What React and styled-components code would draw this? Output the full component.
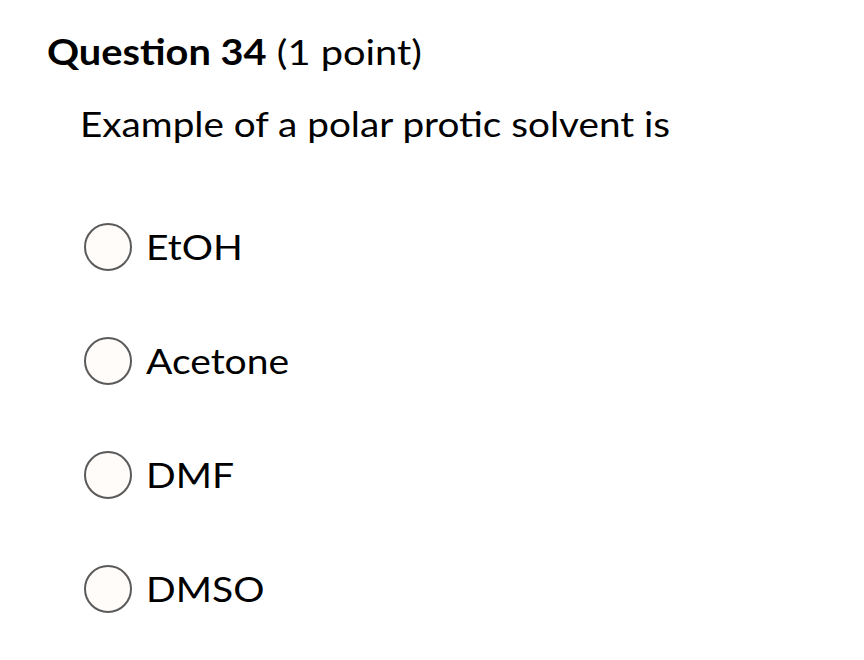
import React from 'react'
import styled, { createGlobalStyle } from 'styled-components'

const GlobalStyle = createGlobalStyle`
  html, body {
    margin: 0;
    padding: 0;
    background: #ffffff;
  }
  body {
    font-family: Lato, "Liberation Sans", sans-serif;
    color: #000000;
  }
`

const options = ['EtOH', 'Acetone', 'DMF', 'DMSO']

const App = () => {
  return (
    <>
      <GlobalStyle />
      <Page>
        <Title>
          <strong>Question 34</strong> (1 point)
        </Title>
        <Prompt>Example of a polar protic solvent is</Prompt>
        <Options>
          {options.map(opt => (
            <Option key={opt}>
              <Radio type="radio" name="q34" />
              <OptionText>{opt}</OptionText>
            </Option>
          ))}
        </Options>
      </Page>
    </>
  )
}

export default App

const Page = styled.div`
  width: 864px;
  height: 660px;
  box-sizing: border-box;
  padding: 31px 0 0 47px;
  overflow: hidden;
`

// the screenshot's text is a little wider than Lato, so stretch it a bit
const Title = styled.h2`
  width: fit-content;
  margin: 0;
  font-size: 35.5px;
  font-weight: 400;
  line-height: 1.2;
  color: #000;
  white-space: nowrap;
  transform-origin: left center;
  transform: scaleX(1.12);
  strong {
    font-weight: 700;
  }
`

const Prompt = styled.p`
  width: fit-content;
  margin: 29px 0 0 33px;
  font-size: 35.5px;
  line-height: 1.2;
  white-space: nowrap;
  transform-origin: left center;
  transform: scaleX(1.09);
`

const Options = styled.div`
  display: flex;
  flex-direction: column;
  gap: 66px;
  margin: 78px 0 0 37px;
`

const Option = styled.label`
  display: flex;
  align-items: center;
  gap: 14px;
  height: 48px;
`

const Radio = styled.input`
  appearance: none;
  margin: 0;
  flex: none;
  width: 48px;
  height: 48px;
  border-radius: 50%;
  border: 2.5px solid #5a5a5a;
  background: #fffcfa;
  box-sizing: border-box;
`

const OptionText = styled.span`
  display: inline-block;
  font-size: 35.5px;
  line-height: 1.2;
  white-space: nowrap;
  transform-origin: left center;
  transform: scaleX(1.1);
`
